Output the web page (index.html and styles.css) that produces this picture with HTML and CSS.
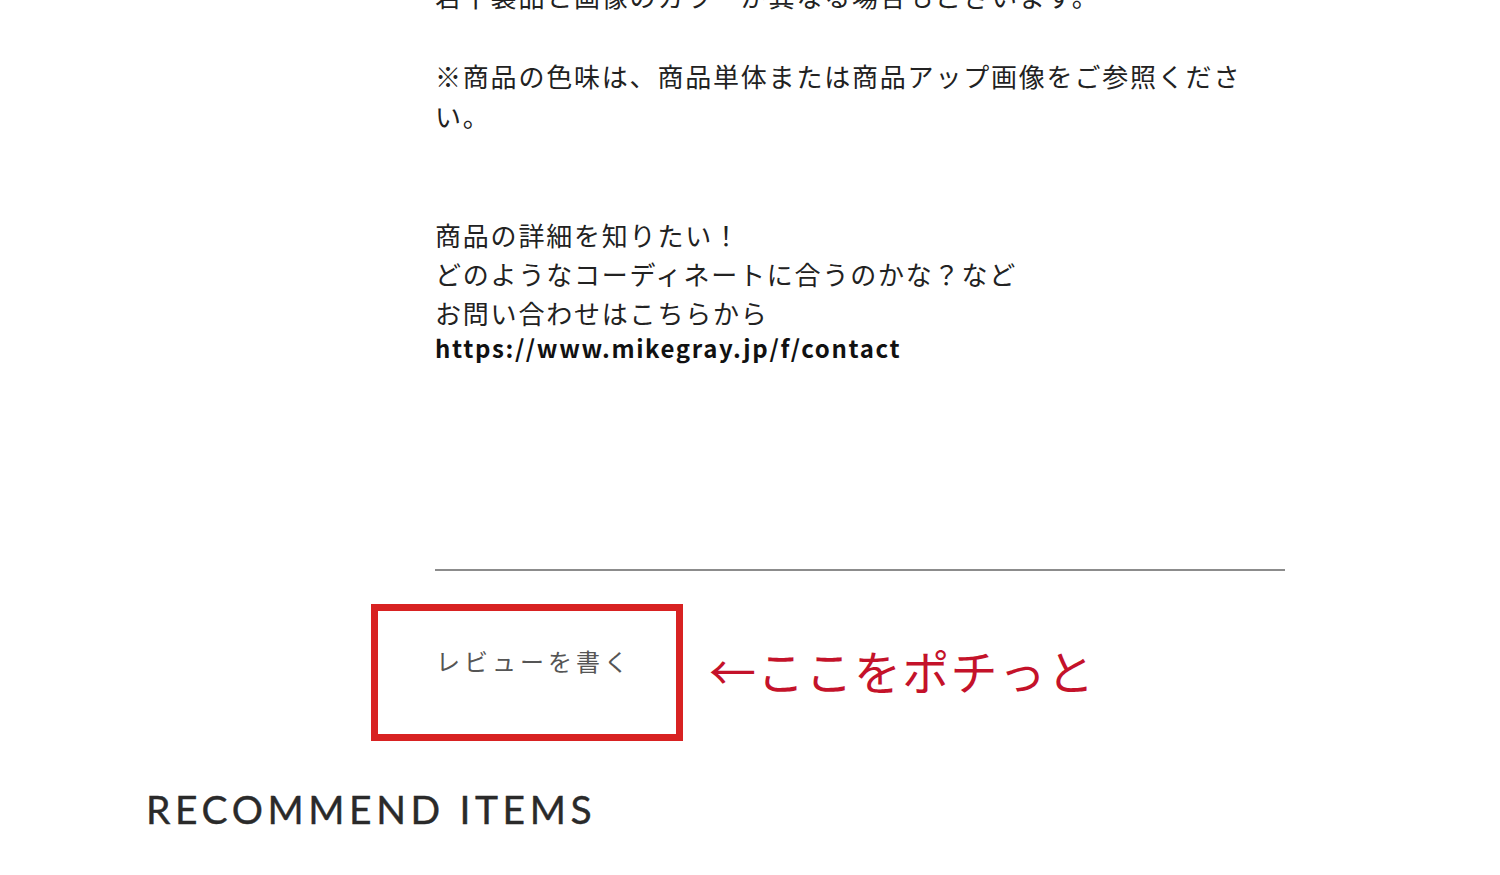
FILE: index.html
```html
<!DOCTYPE html>
<html lang="ja">
<head>
  <meta charset="UTF-8" />
  <meta name="viewport" content="width=device-width, initial-scale=1.0" />
  <title>商品詳細</title>
  <link rel="stylesheet" href="styles.css">
</head>
<body>
  <div class="page">
    <div class="detail">
      <div class="desc">
        <p>若干製品と画像のカラーが異なる場合もございます。<br><br>※商品の色味は、商品単体または商品アップ画像をご参照ください。</p>
        <p class="ask">商品の詳細を知りたい！<br>どのようなコーディネートに合うのかな？など<br>お問い合わせはこちらから</p>
        <p class="url">https://www.mikegray.jp/f/contact</p>
      </div>
      <hr class="divider">
      <div class="review-row">
        <div class="review-btn">レビューを書く</div>
        <div class="note">←ここをポチっと</div>
      </div>
    </div>
    <h2 class="recommend">RECOMMEND ITEMS</h2>
  </div>
</body>
</html>
```

FILE: styles.css
```css
body {
  margin: 0;
  background: #fff;
  color: #222;
  font-family: "Noto Sans CJK JP", "Noto Sans", sans-serif;
  overflow: hidden;
}
.page {
  padding: 0 0 0 146px;
}
.detail {
  margin-left: 289px;
  width: 850px;
}
.desc {
  margin-top: -24px;
}
.desc p {
  margin: 0;
  font-size: 26px;
  line-height: 40px;
  letter-spacing: 1.8px;
}
.desc .ask {
  margin-top: 79px;
  line-height: 39px;
}
.desc .url {
  font-size: 24px;
  font-weight: bold;
  line-height: 32px;
  letter-spacing: 1.65px;
  color: #111;
}
.divider {
  margin: 205px 0 0;
  border: none;
  border-top: 2px solid #8c8c8c;
}
.review-row {
  display: flex;
  align-items: center;
  gap: 26px;
  margin: 33px 0 0 -64px;
}
.review-btn {
  box-sizing: border-box;
  width: 312px;
  height: 137px;
  padding: 34px 0 0 58px;
  border: 7px solid #d82222;
  font-size: 24px;
  line-height: 32px;
  letter-spacing: 4px;
  color: #555;
}
.note {
  font-size: 47px;
  letter-spacing: 1.3px;
  color: #c4122a;
  margin-top: -6px;
}
.recommend {
  margin: 44px 0 0;
  font-family: Lato, "Open Sans", sans-serif;
  font-weight: 400;
  font-size: 39px;
  line-height: 48px;
  letter-spacing: 4.6px;
  color: #2a2a2a;
  -webkit-text-stroke: 0.4px #2a2a2a;
}
```
